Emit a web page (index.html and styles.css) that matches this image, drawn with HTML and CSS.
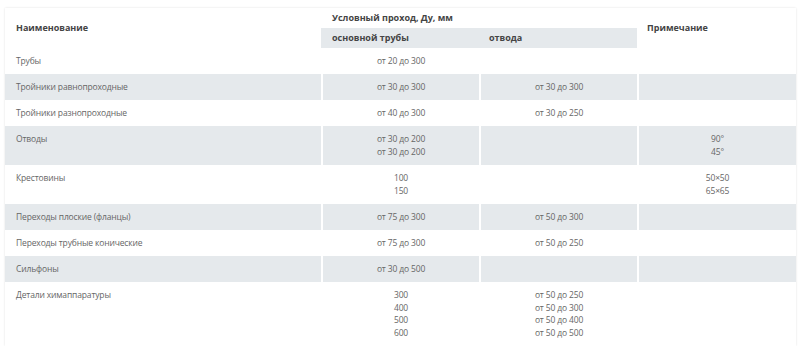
FILE: index.html
```html
<!DOCTYPE html>
<html lang="ru">
<head>
<meta charset="utf-8">
<title>Условный проход</title>
<link rel="stylesheet" href="styles.css">
</head>
<body>
<div class="wrap">
<table class="spec">
  <colgroup>
    <col class="c-name">
    <col class="c-val">
    <col class="c-val">
    <col class="c-note">
  </colgroup>
  <thead>
    <tr class="hr1">
      <th rowspan="2" class="h-name">Наименование</th>
      <th colspan="2" class="h-dy">Условный проход, Ду, мм</th>
      <th rowspan="2" class="h-note">Примечание</th>
    </tr>
    <tr class="hr2">
      <th class="h-sub">основной трубы</th>
      <th class="h-sub h-sub2">отвода</th>
    </tr>
  </thead>
  <tbody>
    <tr>
      <td>Трубы</td>
      <td class="c">от 20 до 300</td>
      <td class="c"></td>
      <td class="c"></td>
    </tr>
    <tr class="alt">
      <td>Тройники равнопроходные</td>
      <td class="c">от 30 до 300</td>
      <td class="c">от 30 до 300</td>
      <td class="c"></td>
    </tr>
    <tr>
      <td>Тройники разнопроходные</td>
      <td class="c">от 40 до 300</td>
      <td class="c">от 30 до 250</td>
      <td class="c"></td>
    </tr>
    <tr class="alt">
      <td>Отводы</td>
      <td class="c">от 30 до 200<br>от 30 до 200</td>
      <td class="c"></td>
      <td class="c">90°<br>45°</td>
    </tr>
    <tr>
      <td>Крестовины</td>
      <td class="c">100<br>150</td>
      <td class="c"></td>
      <td class="c">50×50<br>65×65</td>
    </tr>
    <tr class="alt">
      <td>Переходы плоские (фланцы)</td>
      <td class="c">от 75 до 300</td>
      <td class="c">от 50 до 300</td>
      <td class="c"></td>
    </tr>
    <tr>
      <td>Переходы трубные конические</td>
      <td class="c">от 75 до 300</td>
      <td class="c">от 50 до 250</td>
      <td class="c"></td>
    </tr>
    <tr class="alt">
      <td>Сильфоны</td>
      <td class="c">от 30 до 500</td>
      <td class="c"></td>
      <td class="c"></td>
    </tr>
    <tr>
      <td>Детали химаппаратуры</td>
      <td class="c">300<br>400<br>500<br>600</td>
      <td class="c">от 50 до 250<br>от 50 до 300<br>от 50 до 400<br>от 50 до 500</td>
      <td class="c"></td>
    </tr>
  </tbody>
</table>
</div>
</body>
</html>
```
FILE: styles.css
```css
html, body {
  margin: 0;
  padding: 0;
  background: #fff;
}
.wrap {
  padding: 8px 0 0 5px;
}
.spec {
  width: 791px;
  table-layout: fixed;
  border-collapse: separate;
  border-spacing: 0;
  font-family: "Open Sans", "Noto Sans", sans-serif;
  font-size: 8.5px;
  letter-spacing: -0.15px;
  line-height: 12.6px;
  color: #666;
  box-shadow: 0 0 2px rgba(0, 0, 0, 0.12);
  background: #fff;
}
.c-name { width: 316px; }
.c-val { width: 158px; }
.c-note { width: 159px; }

.spec th {
  font-size: 9px;
  letter-spacing: 0;
  font-weight: 700;
  color: #444;
  text-align: left;
  padding: 0 10px 0 11px;
  vertical-align: middle;
}
.spec .hr1 { height: 20px; }
.spec .hr2 { height: 20px; }
.spec .h-dy { padding-top: 1px; }
.spec .h-note { padding-left: 10px; }
.spec .h-sub {
  background: #e5e9ec;
  padding-top: 1px;
}
.spec .h-sub2 { padding-left: 10px; }

.spec td {
  padding: 7px 11px 6.5px;
  vertical-align: top;
}
.spec td + td {
  border-left: 2px solid #fff;
}
.spec td.c {
  text-align: center;
  padding-left: 4px;
  padding-right: 4px;
}
.spec tr.alt td {
  background: #e5e9ec;
}
```
